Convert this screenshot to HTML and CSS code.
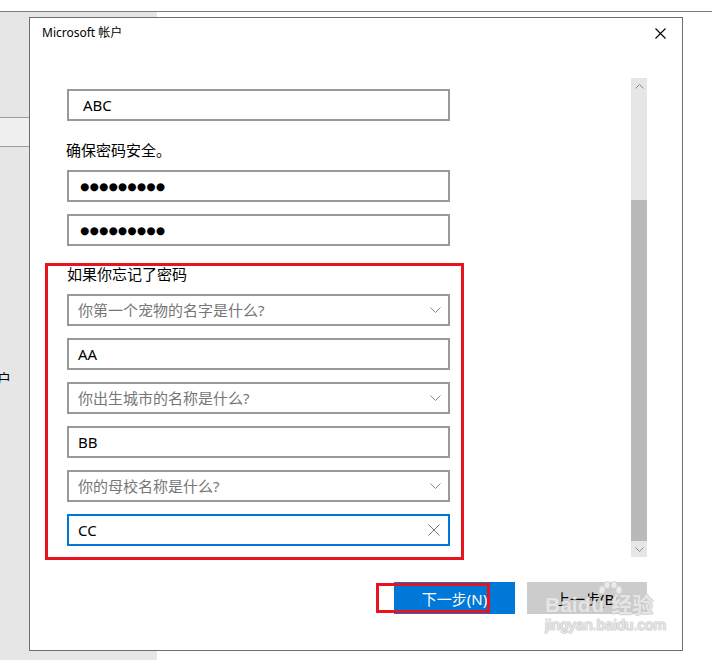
FILE: index.html
```html
<!DOCTYPE html>
<html lang="zh-CN">
<head>
    <meta charset="UTF-8">
    <meta name="viewport" content="width=device-width, initial-scale=1.0">
    <title>Microsoft 帐户</title>
    <link rel="stylesheet" href="styles.css">
</head>
<body>
    <div class="topbar"></div>
    <div class="desk">
        <aside class="side">
            <div class="side-gap"></div>
            <div class="side-item selected"></div>
            <div class="side-item"></div>
            <div class="side-label">帐户</div>
        </aside>

        <div class="dialog">
            <div class="dlg-head">
                <span class="dlg-title">Microsoft 帐户</span>
                <svg class="dlg-close" width="11" height="11" viewBox="0 0 11 11">
                    <path d="M0.5,0.5L10.5,10.5M10.5,0.5L0.5,10.5" stroke="#000" stroke-width="1.1" fill="none"/>
                </svg>
            </div>

            <div class="dlg-body">
                <div class="form">
                    <div class="field name">ABC</div>
                    <p class="hint">确保密码安全。</p>
                    <div class="field pwd">●●●●●●●●●</div>
                    <div class="field pwd second">●●●●●●●●●</div>

                    <section class="recover">
                        <p class="hint">如果你忘记了密码</p>
                        <div class="field select">
                            <span class="placeholder">你第一个宠物的名字是什么?</span>
                            <svg class="chevron" width="11" height="7" viewBox="0 0 11 7"><path d="M0.5,0.5L5.5,5.5L10.5,0.5" stroke="#888" fill="none"/></svg>
                        </div>
                        <div class="field">AA</div>
                        <div class="field select">
                            <span class="placeholder">你出生城市的名称是什么?</span>
                            <svg class="chevron" width="11" height="7" viewBox="0 0 11 7"><path d="M0.5,0.5L5.5,5.5L10.5,0.5" stroke="#888" fill="none"/></svg>
                        </div>
                        <div class="field">BB</div>
                        <div class="field select">
                            <span class="placeholder">你的母校名称是什么?</span>
                            <svg class="chevron" width="11" height="7" viewBox="0 0 11 7"><path d="M0.5,0.5L5.5,5.5L10.5,0.5" stroke="#888" fill="none"/></svg>
                        </div>
                        <div class="field focus">
                            <span>CC</span>
                            <svg class="clear" width="12" height="12" viewBox="0 0 12 12"><path d="M0.5,0.5L11.5,11.5M11.5,0.5L0.5,11.5" stroke="#777" fill="none"/></svg>
                        </div>
                    </section>
                </div>

                <div class="scrollbar">
                    <div class="sb-arrow">
                        <svg width="9" height="5" viewBox="0 0 9 5"><path d="M0.5,4.5L4.5,0.5L8.5,4.5" stroke="#888" fill="none"/></svg>
                    </div>
                    <div class="sb-track">
                        <div class="sb-thumb"></div>
                    </div>
                    <div class="sb-arrow">
                        <svg width="9" height="5" viewBox="0 0 9 5"><path d="M0.5,0.5L4.5,4.5L8.5,0.5" stroke="#888" fill="none"/></svg>
                    </div>
                </div>
            </div>

            <div class="dlg-foot">
                <button class="btn primary">下一步(N)</button>
                <button class="btn">上一步(B)</button>
                <div class="mark-box"></div>
                <div class="watermark">
                    <svg class="paw" width="26" height="24" viewBox="0 0 26 24">
                        <g fill="rgba(255,255,255,0.6)" stroke="#d6d6d6" stroke-width="1">
                            <ellipse cx="5" cy="9" rx="3" ry="4"/>
                            <ellipse cx="10" cy="4" rx="3" ry="3.5"/>
                            <ellipse cx="17" cy="4" rx="3" ry="3.5"/>
                            <ellipse cx="22" cy="9" rx="3" ry="4"/>
                        </g>
                    </svg>
                    <div class="wm-main">Bai<span class="wm-du">du</span> 经验</div>
                    <div class="wm-sub">jingyan.baidu.com</div>
                </div>
            </div>
        </div>
    </div>
</body>
</html>
```

FILE: styles.css
```css
html, body {
    margin: 0;
    padding: 0;
}

body {
    background: #fff;
    font-family: "Noto Sans", "Noto Sans CJK SC", sans-serif;
    color: #000;
    width: 712px;
    height: 660px;
    overflow: hidden;
}

.topbar {
    height: 11px;
    border-bottom: 1px solid #7c7c7c;
}

.desk {
    position: relative;
    height: 648px;
}

/* settings page behind the dialog */
.side {
    width: 157px;
    height: 100%;
    background: #e6e6e6;
    overflow: hidden;
}

.side-gap {
    height: 105px;
}

.side-item {
    height: 28px;
    border-top: 1px solid #9a9a9a;
}

.side-item.selected {
    background: #f0f0f0;
}

.side-label {
    margin-top: 196px;
    margin-left: -17px;
    font-size: 14px;
    line-height: 16px;
}

/* dialog window */
.dialog {
    position: absolute;
    left: 29px;
    top: 5px;
    width: 654px;
    height: 634px;
    box-sizing: border-box;
    border: 1px solid #6e6e6e;
    background: #fff;
    display: flex;
    flex-direction: column;
}

.dlg-head {
    height: 60px;
    box-sizing: border-box;
    padding: 7px 16px 0 12px;
    display: flex;
    justify-content: space-between;
    align-items: flex-start;
}

.dlg-title {
    font-size: 12px;
    line-height: 16px;
}

.dlg-close {
    margin-top: 3px;
}

.dlg-body {
    height: 479px;
    display: flex;
}

.form {
    padding: 11px 0 0 37px;
    width: 383px;
}

.field {
    width: 383px;
    height: 32px;
    box-sizing: border-box;
    border: 2px solid #999;
    padding: 0 9px;
    font-size: 15px;
    line-height: 28px;
    display: flex;
    align-items: center;
    justify-content: space-between;
    margin-top: 12px;
}

.field.name {
    margin-top: 0;
    padding-left: 14px;
}

.field.pwd {
    margin-top: 10px;
    padding-left: 11px;
    justify-content: flex-start;
    font-family: "DejaVu Sans", sans-serif;
    font-size: 10.5px;
    letter-spacing: 0.3px;
}

.field.pwd.second {
    margin-top: 12px;
}

.field.focus {
    border-color: #0078d7;
}

.placeholder {
    color: #767676;
}

.chevron {
    margin-right: -2px;
}

.clear {
    margin-right: -1px;
}

.hint {
    margin: 19px 0 0 -1px;
    font-size: 15px;
    line-height: 20px;
}

.recover {
    width: 419px;
    box-sizing: border-box;
    margin: 17px 0 0 -22px;
    border: 3px solid #e8131d;
    padding: 0 11px 11px 19px;
}

.recover .hint {
    margin: 0;
    line-height: 16px;
}

/* scrollbar */
.scrollbar {
    margin-left: auto;
    margin-right: 35px;
    width: 16px;
    display: flex;
    flex-direction: column;
    background: #e6e6e6;
}

.sb-arrow {
    height: 16px;
    display: flex;
    align-items: center;
    justify-content: center;
}

.sb-track {
    flex: 1;
    padding-top: 106px;
    display: flex;
}

.sb-thumb {
    flex: 1;
    background: #b9b9b9;
}

/* buttons */
.dlg-foot {
    position: relative;
    flex: 1;
    display: flex;
    justify-content: flex-end;
    align-items: flex-start;
    gap: 12px;
    padding: 25px 35px 0 0;
}

.btn {
    width: 120px;
    height: 32px;
    border: none;
    background: #ccc;
    color: #000;
    font-family: "Noto Sans", "Noto Sans CJK SC", sans-serif;
    font-size: 15px;
    padding: 0;
}

.btn.primary {
    width: 121px;
    background: #0078d7;
    color: #fff;
}

.mark-box {
    position: absolute;
    left: 346px;
    top: 26px;
    width: 114px;
    height: 30px;
    box-sizing: border-box;
    border: 3px solid #e8131d;
}

.watermark {
    position: absolute;
    left: 515px;
    top: 22px;
    width: 130px;
    color: rgba(255, 255, 255, 0.55);
    font-family: "Liberation Sans", "Noto Sans CJK SC", sans-serif;
    text-shadow: 1px 0 0 rgba(200, 200, 200, 0.7), -1px 0 0 rgba(200, 200, 200, 0.7), 0 1px 0 rgba(200, 200, 200, 0.7), 0 -1px 0 rgba(200, 200, 200, 0.7);
}

.paw {
    position: absolute;
    left: 52px;
    top: 2px;
}

.wm-main {
    margin-top: 14px;
    font-size: 21px;
    line-height: 24px;
    font-weight: bold;
}

.wm-du {
    letter-spacing: 1px;
}

.wm-sub {
    font-size: 15px;
    line-height: 16px;
}
```
